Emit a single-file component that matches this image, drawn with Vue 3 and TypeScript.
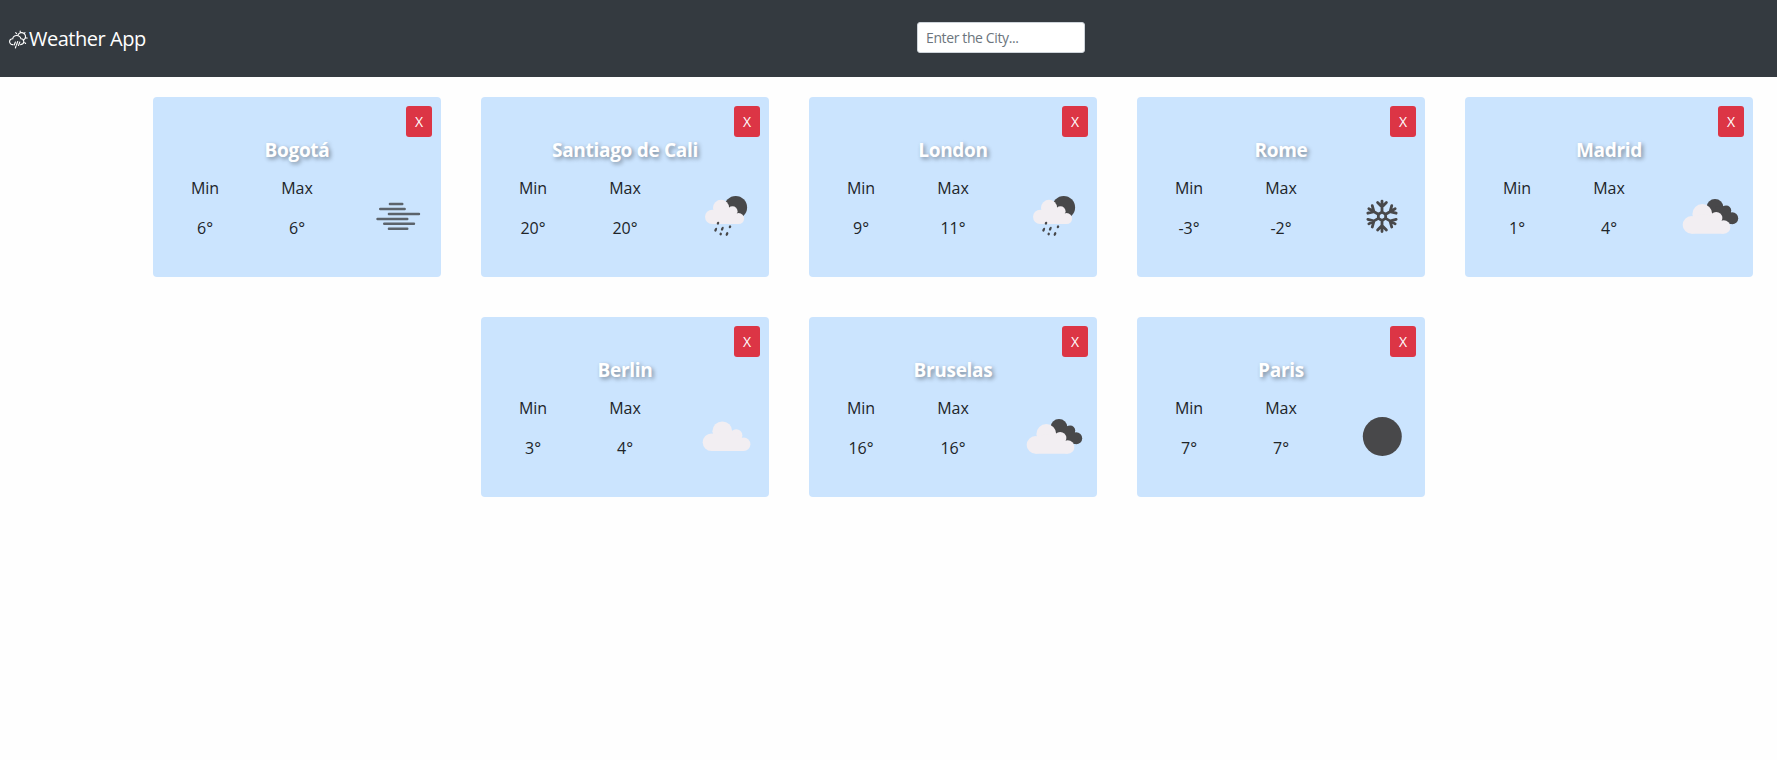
<script setup lang="ts">
import { ref } from 'vue'

type IconName = 'mist' | 'rain' | 'snow' | 'broken' | 'cloud' | 'clear'

interface City {
  id: number
  name: string
  min: number
  max: number
  icon: IconName
}

const cities = ref<City[]>([
  { id: 1, name: 'Bogotá', min: 6, max: 6, icon: 'mist' },
  { id: 2, name: 'Santiago de Cali', min: 20, max: 20, icon: 'rain' },
  { id: 3, name: 'London', min: 9, max: 11, icon: 'rain' },
  { id: 4, name: 'Rome', min: -3, max: -2, icon: 'snow' },
  { id: 5, name: 'Madrid', min: 1, max: 4, icon: 'broken' },
  { id: 6, name: 'Berlin', min: 3, max: 4, icon: 'cloud' },
  { id: 7, name: 'Bruselas', min: 16, max: 16, icon: 'broken' },
  { id: 8, name: 'Paris', min: 7, max: 7, icon: 'clear' },
])

const search = ref('')

// Placement of the light cloud inside each icon that shows one
const cloudTransforms: Partial<Record<IconName, string>> = {
  broken: 'translate(0 0)',
  cloud: 'translate(4 -2.7)',
  rain: 'translate(7.7 0) scale(0.82) translate(0 -0.4)',
}

const drops: [number, number, number][] = [
  [27, 41.2, 1.5],
  [24.7, 47.7, 2.1],
  [31.3, 46.7, 2.1],
  [39, 44.8, 1.5],
  [29.7, 52, 1.4],
  [36, 52, 2],
]

const angles = [0, 60, 120, 180, 240, 300]

function onClose(id: number): void {
  cities.value = cities.value.filter((c) => c.id !== id)
}
</script>

<template>
  <div class="page">
    <nav class="navbar">
      <a class="brand">
        <svg class="logo" viewBox="0 0 20 20">
          <path d="M5 14.600C3.100 14.800 1.600 13.400 1.600 11.600C1.600 9.900 3 8.700 4.700 8.800C5.100 6.700 6.700 5.500 8.700 5.500C10.800 5.500 12.400 6.800 12.900 8.700C14.800 8.700 15.800 10 15.800 11.600C15.800 13.300 14.400 14.500 12.600 14.600" />
          <path d="M9.800 5.200A4 4 0 1 1 15.300 10.200M12.200 1V2.400M7.700 2.700L8.600 3.600M17 2.700L16 3.700M17.600 8H19.200M16.700 12.600L17.600 13.500" />
          <path d="M7.400 12L6.200 15M9.700 11.500L8.500 15M11.800 12L10.500 15.500M8 16L7.400 18" />
        </svg>
        <span>Weather App</span>
      </a>
      <form class="search" @submit.prevent>
        <input v-model="search" type="text" placeholder="Enter the City..." />
      </form>
    </nav>

    <main class="cards">
      <article v-for="city in cities" :key="city.id" class="card">
        <button class="close" @click="onClose(city.id)">X</button>
        <h5 class="title">{{ city.name }}</h5>
        <div class="row">
          <div class="col">
            <p>Min</p>
            <p>{{ city.min }}°</p>
          </div>
          <div class="col">
            <p>Max</p>
            <p>{{ city.max }}°</p>
          </div>
          <svg class="icon" viewBox="0 0 70 70">
            <path
              v-if="city.icon === 'mist'"
              class="bars"
              d="M26.900 22H39.300M17.200 27H41.700M25.900 32H56M14.500 37H44.300M21.200 41.800H51M25.900 46.700H44.300"
            />
            <g v-if="city.icon === 'snow'" class="flake" transform="translate(35 34.300)">
              <path
                v-for="a in angles"
                :key="a"
                :transform="`rotate(${a})`"
                d="M0 -4.200V-15.200M-4.400 -13.800L0 -9.300L4.400 -13.800M0 -4.200L3.640 -2.100"
              />
            </g>
            <circle v-if="city.icon === 'clear'" class="dark" cx="35.300" cy="34.500" r="19.500" />
            <circle v-if="city.icon === 'rain'" class="dark" cx="44.700" cy="25.400" r="11.400" />
            <g v-if="city.icon === 'broken'" class="dark">
              <circle cx="40" cy="25.400" r="8.500" />
              <circle cx="51.200" cy="28.500" r="5" />
              <circle cx="57.200" cy="36.300" r="6" />
              <path d="M40 25L51 24L60 36L56 42L42 38Z" />
            </g>
            <g v-if="cloudTransforms[city.icon]" class="light" :transform="cloudTransforms[city.icon]">
              <circle cx="27.300" cy="32" r="9.900" />
              <circle cx="16.500" cy="42.900" r="8.800" />
              <circle cx="41.200" cy="36.100" r="6.200" />
              <circle cx="48.700" cy="45" r="6.700" />
              <path d="M16.500 51.700V36L27 32L41 34L46 40L48.700 51.700Z" />
            </g>
            <template v-if="city.icon === 'rain'">
              <ellipse
                v-for="([x, y, r], i) in drops"
                :key="i"
                class="dark"
                :cx="x"
                :cy="y"
                rx="1.200"
                :ry="r"
                :transform="`rotate(24 ${x} ${y})`"
              />
            </template>
          </svg>
        </div>
      </article>
    </main>
  </div>
</template>

<style>
body {
  margin: 0;
  background: #fefefe;
}
</style>

<style scoped>
.page {
  min-height: 760px;
  color: #212529;
  font-family: "Segoe UI", "Open Sans", "Noto Sans", sans-serif;
  font-size: 16px;
  line-height: 24px;
}

.navbar {
  display: flex;
  align-items: center;
  height: 77px;
  box-sizing: border-box;
  padding: 0 8px;
  background: #343a40;
}

.brand {
  display: flex;
  align-items: center;
  width: 909px;
  color: #fff;
  font-size: 20px;
  letter-spacing: -0.48px;
  line-height: 30px;
}

.brand span {
  padding-top: 1px;
}

.logo {
  width: 20px;
  height: 20px;
  margin: 3px 1px 0 0;
  fill: none;
  stroke: #fff;
  stroke-width: 1.1;
  stroke-linecap: round;
}

.search {
  display: flex;
  margin-bottom: 2px;
}

.search input {
  box-sizing: border-box;
  width: 168px;
  height: 31px;
  padding: 4px 8px;
  border: 1px solid #ced4da;
  border-radius: 3px;
  background: #fff;
  color: #495057;
  font: 14px/21px "Segoe UI", "Open Sans", "Noto Sans", sans-serif;
  letter-spacing: -0.38px;
  outline: none;
}

.search input::placeholder {
  color: #6c757d;
  opacity: 1;
}

.cards {
  display: flex;
  flex-wrap: wrap;
  justify-content: center;
  gap: 40px;
  padding: 20px 0 20px 129px;
}

.card {
  display: flex;
  flex-direction: column;
  box-sizing: border-box;
  width: 288px;
  height: 180px;
  padding-top: 9px;
  border-radius: 4px;
  background: #cbe4fe;
}

.close {
  align-self: flex-end;
  width: 26px;
  height: 31px;
  margin-right: 9px;
  padding: 0;
  border: 0;
  border-radius: 3px;
  background: #dc3545;
  color: #fff;
  font: 14px/21px "Segoe UI", "Open Sans", "Noto Sans", sans-serif;
  cursor: pointer;
}

.title {
  margin: 1px 0 14px;
  color: #fff;
  font-size: 19px;
  font-weight: 700;
  letter-spacing: -0.3px;
  line-height: 24px;
  text-align: center;
  text-shadow: 2px 2px 4px rgba(0, 0, 0, 0.4);
}

.row {
  display: flex;
  padding-left: 6px;
}

.col {
  display: flex;
  flex-direction: column;
  gap: 16px;
  width: 92px;
  text-align: center;
}

.col p {
  margin: 0;
}

.icon {
  width: 70px;
  height: 70px;
  margin: 6px 0 0 20px;
}

.dark {
  fill: #48484a;
}

.light {
  fill: #f2eef2;
}

.bars {
  stroke: #5c636b;
  stroke-width: 2.4;
  stroke-linecap: round;
}

.flake {
  fill: none;
  stroke: #48484a;
  stroke-width: 2.8;
  stroke-linecap: round;
}
</style>
